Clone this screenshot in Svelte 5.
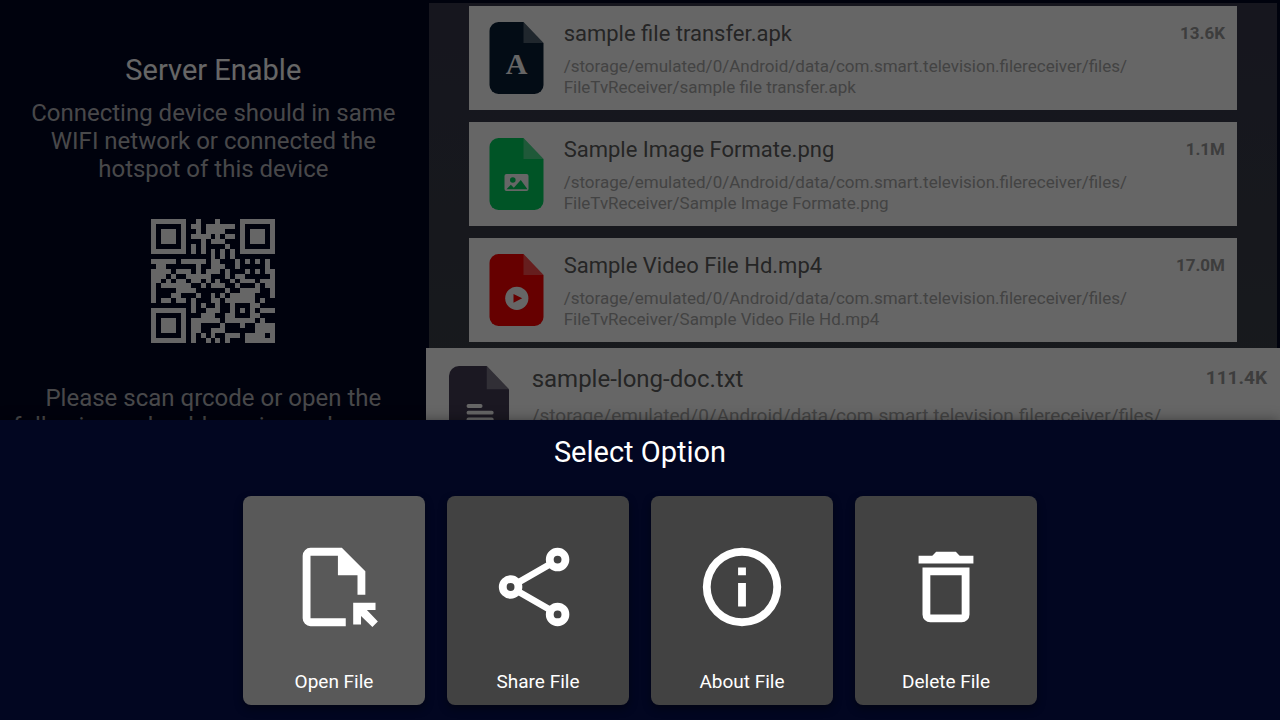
<script lang="ts">
    const files = [
        { name: "sample file transfer.apk", size: "13.6K", kind: "apk", color: "#081e35" },
        { name: "Sample Image Formate.png", size: "1.1M", kind: "image", color: "#02d260" },
        { name: "Sample Video File Hd.mp4", size: "17.0M", kind: "video", color: "#ff0000" },
        { name: "sample-long-doc.txt", size: "111.4K", kind: "text", color: "#443c55" },
    ];

    const options = [
        { label: "Open File", icon: "open" },
        { label: "Share File", icon: "share" },
        { label: "About File", icon: "about" },
        { label: "Delete File", icon: "delete" },
    ];

    const qr = [
        "#######..#...#....#######",
        "#.....#.##.######.#.....#",
        "#.###.#..#.####...#.###.#",
        "#.###.#.####.#.##.#.###.#",
        "#.###.#...#.###...#.###.#",
        "#.....#.#.#....#..#.....#",
        "#######.#.#.#.#.#.#######",
        "............#.#.#........",
        "#####.#####.##...#.#.#.#.",
        ".##......#..###..#.....#.",
        "####.###.#.###.#...#.#.##",
        "###.#..#####...#.##.....#",
        "##.#.##.##.#.#..#.###.###",
        "#.######..#.###..#...#.##",
        "#....####......#..####..#",
        "#...##...#..#.#.#####...#",
        "#.##.##.#...##.######.#..",
        "........#.#..#..#...##...",
        "#######.#..###..#.#.#.###",
        "#.....#...###..##...##...",
        "#.###.#.######.######.#..",
        "#.###.#.##....#...#..####",
        "#.###.#.##..###......####",
        "#.....#.#.#.#..###.####.#",
        "#######.#..#.#.#...######",
    ];

    let focused = $state(3);
    let selected = $state(0);
</script>

<div class="page">
    <div class="screen">
        <section class="server">
            <h1>Server Enable</h1>
            <p>Connecting device should in same WIFI network or connected the hotspot of this device</p>
            <svg class="qr" viewBox="0 0 25 25" role="img" aria-label="QR code" shape-rendering="crispEdges">
                {#each qr as row, y}
                    {#each row as cell, x}
                        {#if cell === "#"}
                            <rect {x} {y} width="1" height="1" />
                        {/if}
                    {/each}
                {/each}
            </svg>
            <p class="hint">Please scan qrcode or open the following web address in any browser</p>
        </section>

        <ul class="files">
            {#each files as file, index}
                <li class="file" class:focused={index === focused}>
                    <svg class="doc" viewBox="0 0 54 72" aria-hidden="true">
                        <path fill={file.color} d="M9 0h25l20 21v42a9 9 0 0 1-9 9H9a9 9 0 0 1-9-9V9a9 9 0 0 1 9-9z" />
                        <path fill="#fff" fill-opacity=".3" d="M34 0l20 21H34z" />
                        {#if file.kind === "apk"}
                            <text x="27" y="52" text-anchor="middle">A</text>
                        {:else if file.kind === "image"}
                            <rect x="15" y="36" width="24" height="17" rx="2" fill="#fff" />
                            <circle cx="23.3" cy="42" r="2.8" fill={file.color} />
                            <path fill={file.color} d="M17 51.2l4.3-4.5 3 3 7-7.7 6.7 9.2z" />
                        {:else if file.kind === "video"}
                            <circle cx="27.3" cy="44.3" r="11.6" fill="#fff" />
                            <path fill={file.color} d="M24 40l8.7 4.3-8.7 4.4z" />
                        {:else}
                            <path stroke="#fff" stroke-width="3.4" stroke-linecap="round" d="M17.5 36h11M17.5 42h21M17.5 48h21M17.5 54h21" />
                        {/if}
                    </svg>
                    <div class="info">
                        <div class="row">
                            <h2>{file.name}</h2>
                            <span class="size">{file.size}</span>
                        </div>
                        <p>/storage/emulated/0/Android/data/com.smart.television.filereceiver/files/<wbr />FileTvReceiver/{file.name}</p>
                    </div>
                </li>
            {/each}
        </ul>
    </div>

    <div class="sheet" role="dialog" aria-labelledby="sheet-title">
        <h2 id="sheet-title">Select Option</h2>
        <div class="options">
            {#each options as option, index}
                <button class="option" class:selected={index === selected} onclick={() => (selected = index)}>
                    <svg viewBox="0 0 24 24" aria-hidden="true">
                        {#if option.icon === "open"}
                            <path d="M14 2H6a2 2 0 0 0-2 2v16a2 2 0 0 0 2 2h9v-2H6V4h7v5h5v5h2V8z" />
                            <path d="M16.9 16v5.6h2v-2.2l2.9 2.8 1.4-1.4-2.8-2.9h2.2V16z" />
                        {:else if option.icon === "share"}
                            <g fill="none" stroke="#fff" stroke-width="2">
                                <circle cx="17" cy="5" r="2" />
                                <circle cx="5" cy="12" r="2" />
                                <circle cx="17" cy="19" r="2" />
                                <path stroke-width="1.7" d="M7 10.8l8-4.6M7 13.2l8 4.6" />
                            </g>
                        {:else if option.icon === "about"}
                            <path d="M11 9h2V7h-2m1 13a8 8 0 1 1 0-16 8 8 0 0 1 0 16m0-18a10 10 0 1 0 0 20 10 10 0 0 0 0-20m-1 15h2v-6h-2z" />
                        {:else}
                            <path d="M15.5 4l-1-1h-5l-1 1H5v2h14V4z" />
                            <path fill-rule="evenodd" d="M6 7v12a2 2 0 0 0 2 2h8a2 2 0 0 0 2-2V7zm2 2h8v10H8z" />
                        {/if}
                    </svg>
                    <span>{option.label}</span>
                </button>
            {/each}
        </div>
    </div>
</div>

<style>
    :global(body) {
        background: #020621;
        font-family: Roboto, sans-serif;
    }
    h1, h2, p, ul {
        margin: 0;
        padding: 0;
        font-weight: 400;
    }
    .page {
        display: grid;
        grid-template-rows: minmax(0, 1fr) auto;
        height: 100vh;
    }
    .screen {
        position: relative;
        display: grid;
        grid-template-columns: 1fr 2fr;
        overflow: hidden;
    }
    .screen::after {
        content: "";
        position: absolute;
        inset: 0;
        background: rgba(0, 0, 0, 0.6);
    }
    .server {
        display: flex;
        flex-direction: column;
        align-items: center;
        padding: 52px 12px 0;
        text-align: center;
        color: #b4b4b8;
        font-size: 24px;
        line-height: 28px;
    }
    .server h1 {
        margin-bottom: 11px;
        color: #fff;
        font-size: 29px;
        line-height: 36px;
    }
    .qr {
        flex: none;
        width: 124px;
        margin: 36px 0 41px;
        fill: #fff;
    }
    .files {
        display: flex;
        flex-direction: column;
        gap: 12px;
        margin: 3px 3px 0 2px;
        padding: 3px 40px 0;
        list-style: none;
        background: linear-gradient(#38384c, #3c4248 420px);
    }
    .file {
        display: flex;
        flex: none;
        align-items: flex-start;
        gap: 20px;
        box-sizing: border-box;
        min-height: 104px;
        padding: 16px 12px 12px 20px;
        background: #fff;
    }
    .doc {
        flex: none;
        width: 55px;
        height: 72px;
    }
    .doc text {
        fill: #fff;
        font: bold 30px "Liberation Serif", serif;
    }
    .info {
        flex: 1;
        min-width: 0;
    }
    .row {
        display: flex;
        justify-content: space-between;
        margin-bottom: 10px;
    }
    .row h2 {
        color: #5c5c5c;
        font-size: 22px;
        line-height: 24px;
    }
    .size {
        color: #989898;
        font-size: 17px;
        font-weight: 700;
        line-height: 22px;
    }
    .info p {
        color: #a8a8a8;
        font-size: 17px;
        line-height: 21px;
    }
    .file.focused {
        gap: 23px;
        min-height: 116px;
        margin: -6px -43px 0;
        padding: 18px 13px 13px 23px;
    }
    .focused .doc {
        width: 60px;
        height: 80px;
    }
    .focused .row {
        margin-bottom: 12px;
    }
    .focused .row h2 {
        font-size: 24px;
        line-height: 26px;
    }
    .focused .size,
    .focused p {
        font-size: 19px;
        line-height: 24px;
    }
    .sheet {
        z-index: 1;
        padding: 14px 20px 15px;
        background: #020621;
        box-shadow: 0 0 12px rgba(0, 0, 0, 0.4);
        color: #fff;
        text-align: center;
    }
    .sheet h2 {
        margin-bottom: 26px;
        font-size: 29px;
        line-height: 36px;
    }
    .options {
        display: flex;
        justify-content: center;
        gap: 22px;
    }
    .option {
        display: flex;
        flex-direction: column;
        align-items: center;
        gap: 37px;
        width: 182px;
        padding: 44px 0 12px;
        border: 0;
        border-radius: 8px;
        background: #424242;
        box-shadow: 0 4px 8px rgba(0, 0, 0, 0.4);
        color: #fff;
        font: 19px/22px Roboto, sans-serif;
    }
    .option.selected {
        background: #595959;
    }
    .option svg {
        width: 94px;
        height: 94px;
        fill: #fff;
    }
</style>
